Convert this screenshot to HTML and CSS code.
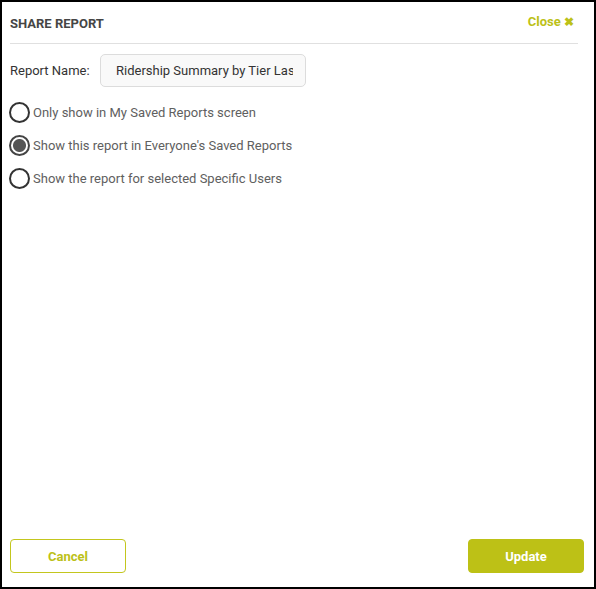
FILE: index.html
```html
<!DOCTYPE html>
<html>
<head>
<meta charset="utf-8">
<link rel="stylesheet" href="styles.css">
</head>
<body>
<div class="dialog">
  <div class="header">
    <div class="title">SHARE REPORT</div>
    <div class="close">Close <span class="x">✖</span></div>
  </div>
  <div class="body">
    <div class="name-row">
      <label class="name-label">Report Name:</label>
      <input class="name-input" type="text" value="Ridership Summary by Tier Last Month">
    </div>
    <label class="radio-row"><input type="radio" name="share" class="radio"><span>Only show in My Saved Reports screen</span></label>
    <label class="radio-row"><input type="radio" name="share" class="radio" checked><span>Show this report in Everyone's Saved Reports</span></label>
    <label class="radio-row"><input type="radio" name="share" class="radio"><span>Show the report for selected Specific Users</span></label>
  </div>
  <div class="footer">
    <button class="btn btn-cancel">Cancel</button>
    <button class="btn btn-update">Update</button>
  </div>
</div>
</body>
</html>
```
FILE: styles.css
```css
* { box-sizing: border-box; }
html, body { margin: 0; padding: 0; }
body {
  width: 596px;
  height: 589px;
  font-family: Roboto, "Liberation Sans", sans-serif;
  background: #fff;
}
.dialog {
  width: 596px;
  height: 589px;
  border: 2px solid #000;
  display: flex;
  flex-direction: column;
  padding: 0 10px 14px 8px;
}
.header {
  display: flex;
  justify-content: space-between;
  align-items: center;
  height: 42px;
  border-bottom: 1px solid #e0e0e0;
  padding-right: 4px;
  margin-right: 6px;
}
.title {
  font-size: 13px;
  font-weight: 700;
  color: #454545;
  padding-top: 1px;
}
.close {
  font-size: 13px;
  font-weight: 700;
  color: #bcc118;
  padding-bottom: 2px;
}
.close .x { font-size: 12px; }
.body {
  flex: 1;
  padding-top: 10px;
}
.name-row {
  display: flex;
  align-items: center;
  height: 33px;
  margin-bottom: 9px;
}
.name-label {
  font-size: 13px;
  color: #333;
  width: 90px;
}
.name-input {
  width: 206px;
  height: 33px;
  border: 1px solid #dcdcdc;
  border-radius: 5px;
  background: #f9f9f9;
  padding: 0 12px 0 15px;
  font-family: Roboto, "Liberation Sans", sans-serif;
  font-size: 13px;
  color: #333;
  outline: none;
}
.radio-row {
  display: flex;
  align-items: center;
  height: 33px;
  font-size: 13px;
  color: #606060;
}
.radio {
  -webkit-appearance: none;
  appearance: none;
  margin: 0 3px 0 -1px;
  width: 21px;
  height: 21px;
  border: 2px solid #333;
  border-radius: 50%;
  background: #fff;
}
.radio:checked {
  border-color: #444;
  background: radial-gradient(circle, #555 0 6px, #fff 7px);
}
.footer {
  display: flex;
  justify-content: space-between;
  padding-left: 0;
  padding-right: 0;
}
.btn {
  width: 116px;
  height: 34px;
  border-radius: 4px;
  font-family: Roboto, "Liberation Sans", sans-serif;
  font-size: 13px;
  font-weight: 700;
  cursor: pointer;
}
.btn-cancel {
  background: #fff;
  border: 1px solid #c3c61e;
  color: #bcc118;
}
.btn-update {
  background: #bdc116;
  border: 1px solid #bdc116;
  color: #fff;
}
```
